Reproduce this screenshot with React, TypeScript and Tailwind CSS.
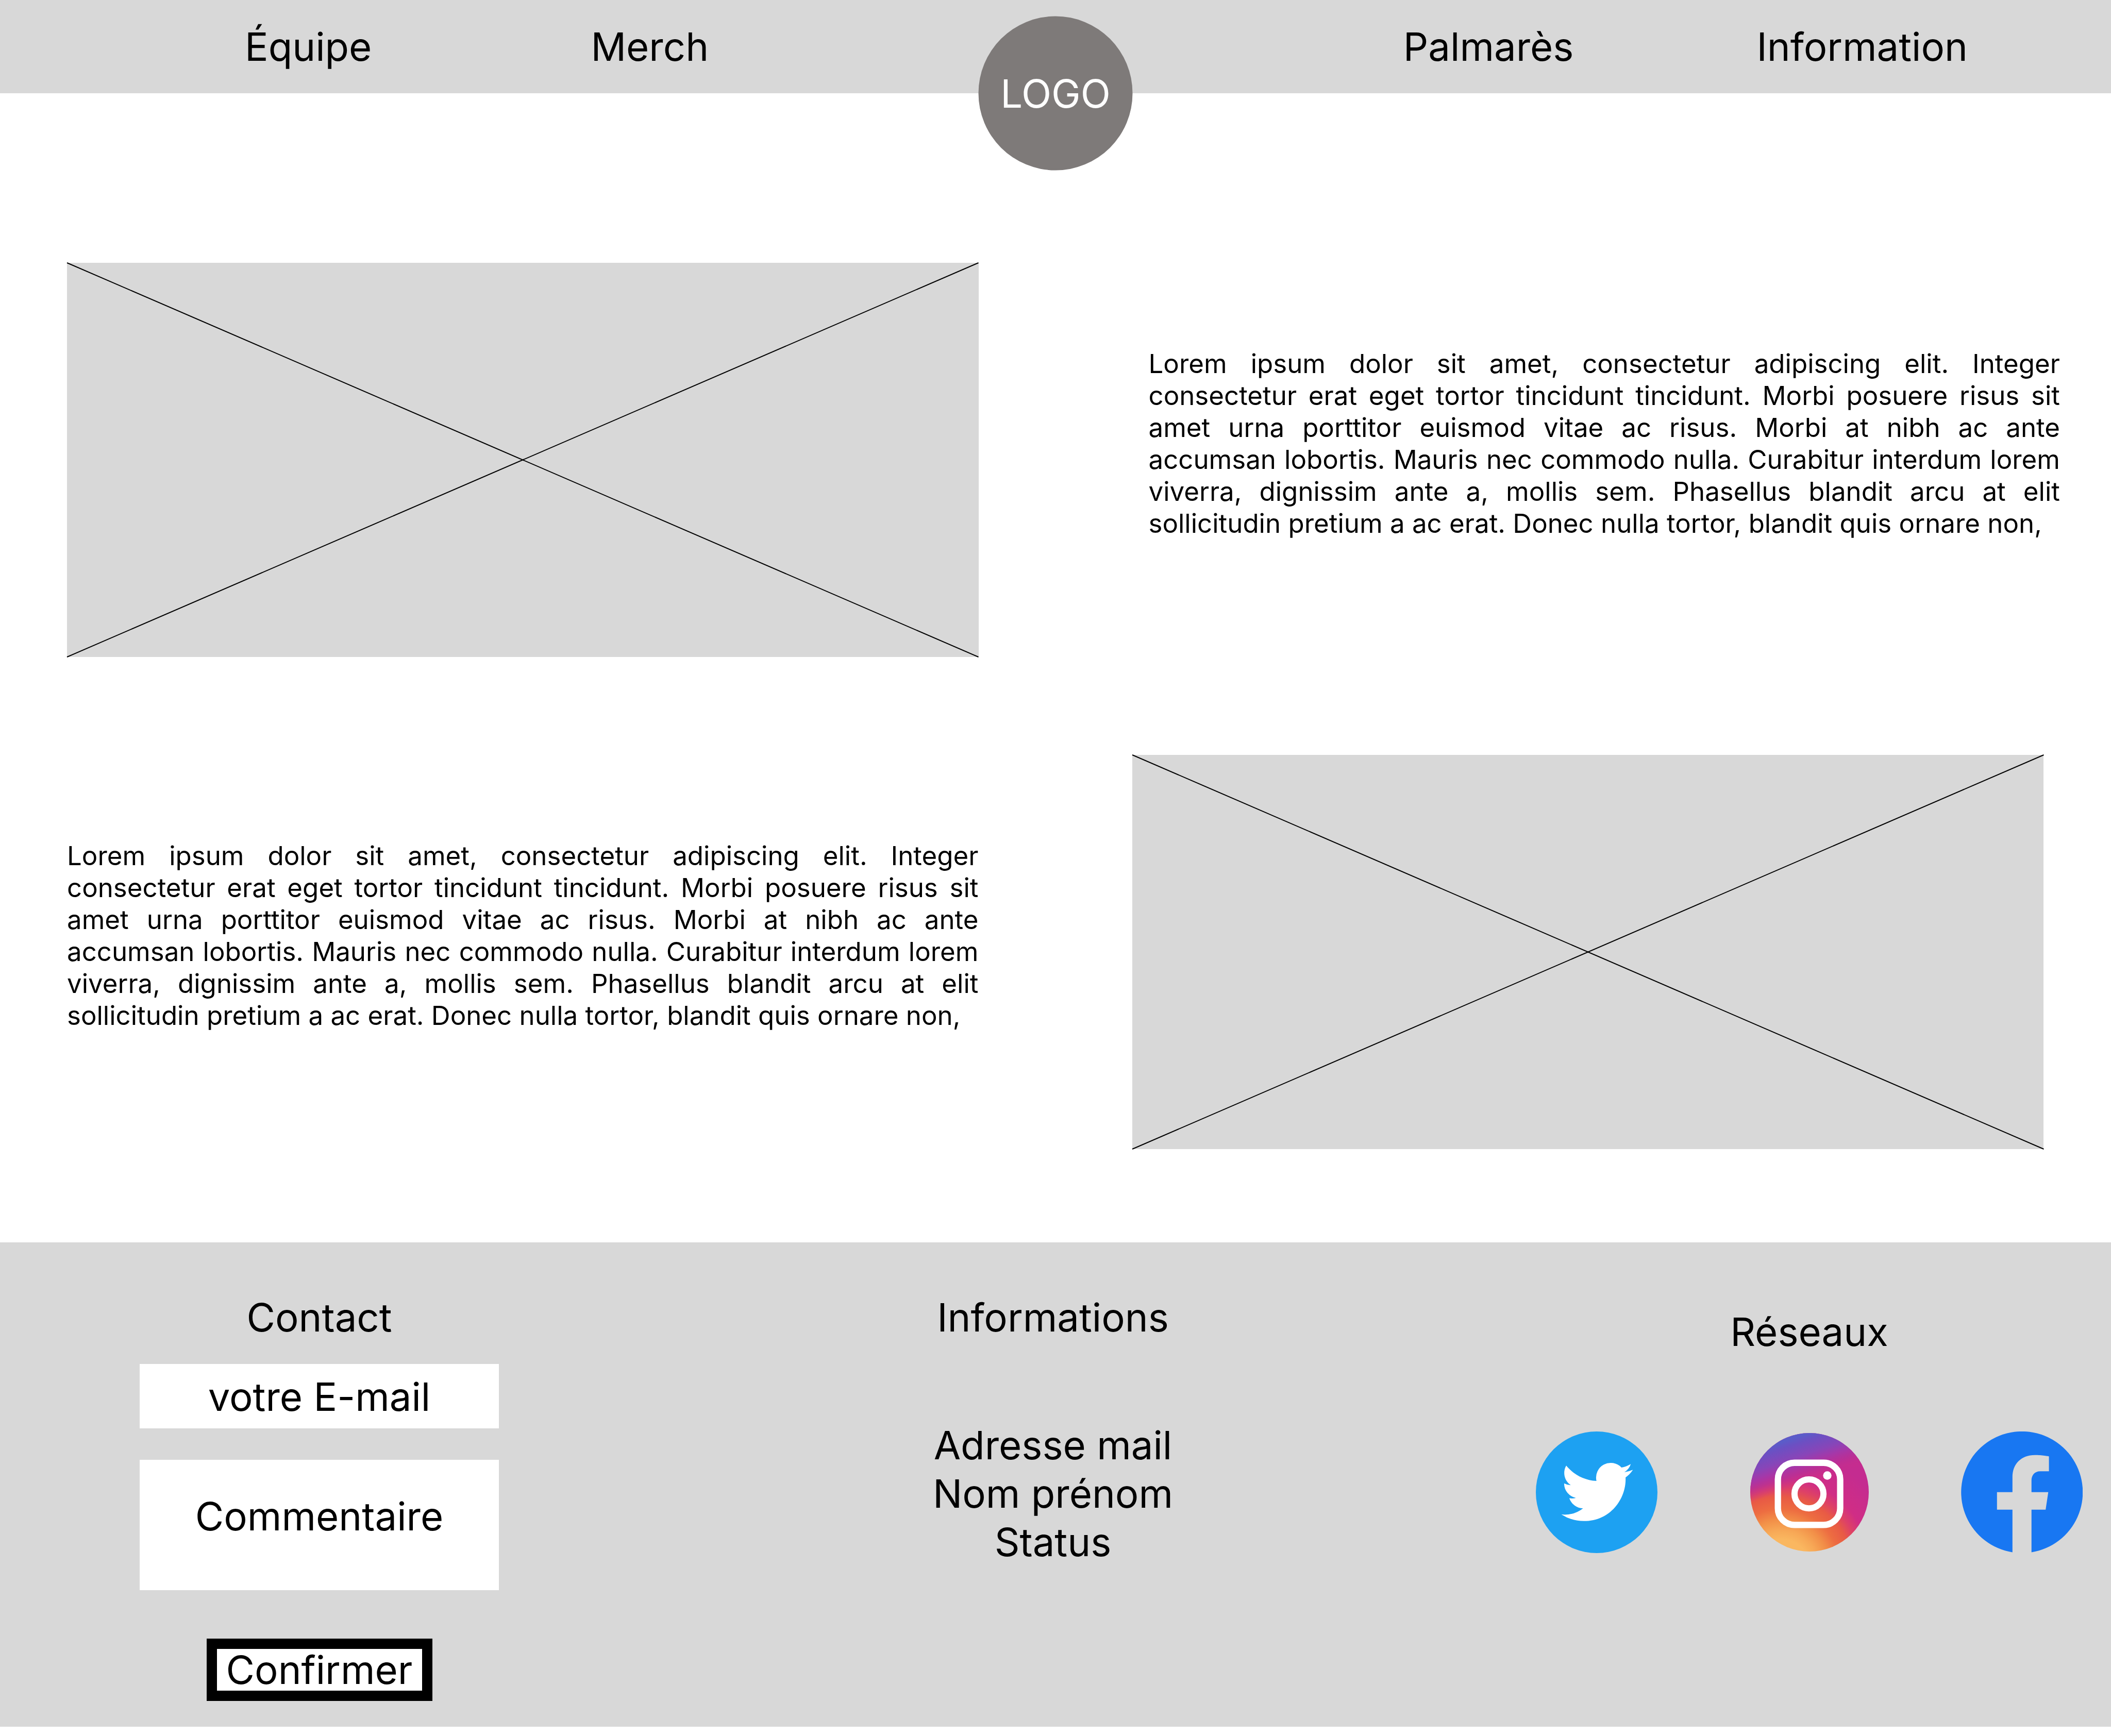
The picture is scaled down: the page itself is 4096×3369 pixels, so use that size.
import React from "react";

const LOREM =
  "Lorem ipsum dolor sit amet, consectetur adipiscing elit. Integer consectetur erat eget tortor tincidunt tincidunt. Morbi posuere risus sit amet urna porttitor euismod vitae ac risus. Morbi at nibh ac ante accumsan lobortis. Mauris nec commodo nulla. Curabitur interdum lorem viverra, dignissim ante a, mollis sem. Phasellus blandit arcu at elit sollicitudin pretium a ac erat. Donec nulla tortor, blandit quis ornare non,";

function ImagePlaceholder() {
  return (
    <div className="h-[765px] min-w-0 flex-1 bg-[#d8d8d8]">
      <svg className="block h-full w-full overflow-visible" role="img" aria-label="Image">
        <line x1="0" y1="0" x2="100%" y2="100%" stroke="#000" strokeWidth="2" />
        <line x1="0" y1="100%" x2="100%" y2="0" stroke="#000" strokeWidth="2" />
      </svg>
    </div>
  );
}

function Paragraph() {
  return (
    <p className="min-w-0 flex-1 pt-[165px] text-justify text-[51px] leading-[62px]">{LOREM}</p>
  );
}

function TwitterIcon() {
  return (
    <svg viewBox="0 0 920 920" className="block size-[236px]" aria-hidden="true">
      <circle cx="460" cy="460" r="460" fill="#1da1f2" />
      <path
        transform="translate(193 187) scale(22.55)"
        fill="#fff"
        d="M23.953 4.57a10 10 0 01-2.825.775 4.958 4.958 0 002.163-2.723c-.951.555-2.005.959-3.127 1.184a4.92 4.92 0 00-8.384 4.482C7.69 8.095 4.067 6.13 1.64 3.162a4.822 4.822 0 00-.666 2.475c0 1.71.87 3.213 2.188 4.096a4.904 4.904 0 01-2.228-.616v.06a4.923 4.923 0 003.946 4.827 4.996 4.996 0 01-2.212.085 4.936 4.936 0 004.604 3.417 9.867 9.867 0 01-6.102 2.105c-.39 0-.779-.023-1.17-.067a13.995 13.995 0 007.557 2.209c9.053 0 13.998-7.496 13.998-13.985 0-.21 0-.42-.015-.63A9.935 9.935 0 0024 4.59z"
      />
    </svg>
  );
}

function InstagramIcon() {
  return (
    <svg viewBox="0 0 900 900" className="block size-[230px]" aria-hidden="true">
      <defs>
        <radialGradient id="ig-warm" gradientUnits="userSpaceOnUse" cx="234" cy="1027" r="900">
          <stop offset="0.245" stopColor="#fab760" />
          <stop offset="0.32" stopColor="#f7a856" />
          <stop offset="0.41" stopColor="#f28f48" />
          <stop offset="0.5" stopColor="#ed6d41" />
          <stop offset="0.6" stopColor="#e85a45" />
          <stop offset="0.67" stopColor="#de4265" />
          <stop offset="0.76" stopColor="#d02d85" />
          <stop offset="1" stopColor="#c42c90" />
        </radialGradient>
        <linearGradient id="ig-cool" gradientUnits="userSpaceOnUse" x1="45" y1="134" x2="158" y2="475">
          <stop offset="0" stopColor="#5b5cc9" />
          <stop offset="0.13" stopColor="#6b50c3" />
          <stop offset="0.4" stopColor="#8845b8" />
          <stop offset="0.58" stopColor="#a637a8" />
          <stop offset="0.75" stopColor="#b43099" stopOpacity="0.7" />
          <stop offset="1" stopColor="#cf2c86" stopOpacity="0" />
        </linearGradient>
      </defs>
      <circle cx="450" cy="450" r="450" fill="url(#ig-warm)" />
      <circle cx="450" cy="450" r="450" fill="url(#ig-cool)" />
      <rect x="210" y="226" width="473" height="472" rx="126" fill="none" stroke="#fff" strokeWidth="48" />
      <circle cx="446" cy="462" r="110" fill="none" stroke="#fff" strokeWidth="47" />
      <circle cx="585" cy="323" r="32" fill="#fff" />
    </svg>
  );
}

function FacebookIcon() {
  return (
    <svg viewBox="0 0 920 920" className="block size-[236px]" aria-hidden="true">
      <path
        fill="#1877f2"
        d="M389 914A460 460 0 1 1 533 914V592H640L660 459H533V370C533 333 555 301 600 301H665V188C665 188 610 178 560 178C455 178 389 245 389 345V459H272V592H389Z"
      />
    </svg>
  );
}

export default function App() {
  return (
    <div className="bg-white pb-[18px] font-['Inter',sans-serif] text-[76px] leading-[94px] text-black">
      <header className="relative">
        <nav className="grid h-[181px] grid-cols-2 items-center bg-[#d8d8d8] pb-[2px]">
          <div className="flex gap-[425px] pl-[475px]">
            <a href="#equipe">Équipe</a>
            <a href="#merch">Merch</a>
          </div>
          <div className="flex justify-end gap-[355px] pr-[278px]">
            <a href="#palmares">Palmarès</a>
            <a href="#information">Information</a>
          </div>
        </nav>
        <a
          href="#accueil"
          className="absolute top-full left-1/2 flex size-[299px] -translate-x-1/2 -translate-y-1/2 items-center justify-center rounded-full bg-[#7e7a79] pb-[2px] text-white"
        >
          LOGO
        </a>
      </header>

      <main className="flex flex-col gap-[190px] pt-[329px] pb-[181px]">
        <section className="flex items-start gap-[330px] pr-[99px] pl-[130px]">
          <ImagePlaceholder />
          <Paragraph />
        </section>
        <section className="flex items-start gap-[298px] pr-[131px] pl-[130px]">
          <Paragraph />
          <ImagePlaceholder />
        </section>
      </main>

      <footer className="grid grid-cols-3 bg-[#d8d8d8] pt-[98px] pb-[50px]">
        <form className="ml-[271px] flex w-[697px] flex-col items-center" onSubmit={(e) => e.preventDefault()}>
          <h2>Contact</h2>
          <input
            type="email"
            aria-label="votre E-mail"
            placeholder="votre E-mail"
            className="mt-[44px] h-[125px] w-full bg-white text-center placeholder:text-black"
          />
          <textarea
            aria-label="Commentaire"
            placeholder="Commentaire"
            className="mt-[61px] block h-[253px] w-full resize-none bg-white pt-[62px] text-center placeholder:text-black"
          />
          <button
            type="submit"
            className="mt-[94px] flex h-[121px] w-[438px] items-center justify-center border-[20px] border-black bg-white pb-[2px]"
          >
            Confirmer
          </button>
        </form>

        <section className="flex flex-col items-center pr-[10px] text-center">
          <h2>Informations</h2>
          <ul className="mt-[154px]">
            <li>Adresse mail</li>
            <li>Nom prénom</li>
            <li>Status</li>
          </ul>
        </section>

        <section className="mr-[55px] flex w-[1061px] flex-col items-center justify-self-end pt-[28px]">
          <h2>Réseaux</h2>
          <div className="mt-[147px] flex w-full items-center justify-between">
            <a href="#twitter" aria-label="Twitter">
              <TwitterIcon />
            </a>
            <a href="#instagram" aria-label="Instagram">
              <InstagramIcon />
            </a>
            <a href="#facebook" aria-label="Facebook">
              <FacebookIcon />
            </a>
          </div>
        </section>
      </footer>
    </div>
  );
}
